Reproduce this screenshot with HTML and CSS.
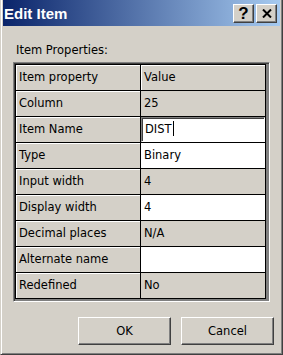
FILE: index.html
```html
<!DOCTYPE html>
<html lang="en">
    <head>
        <meta charset="UTF-8">
        <title>Edit Item</title>
        <link rel="stylesheet" href="styles.css">
    </head>
    <body>
        <div class="window">
            <div class="titlebar">
                <span class="title">Edit Item</span>
                <div class="caption-btns">
                    <button class="cap-btn help">?</button>
                    <button class="cap-btn close">
                        <svg width="10" height="9" viewBox="0 0 10 9">
                            <path d="M1 0.5 L9 8.5 M9 0.5 L1 8.5" stroke="#000" stroke-width="2" fill="none"/>
                        </svg>
                    </button>
                </div>
            </div>

            <div class="content">
                <div class="label">Item Properties:</div>

                <div class="grid-frame">
                    <div class="grid">
                        <div class="cell fixed">Item property</div>
                        <div class="cell fixed">Value</div>

                        <div class="cell fixed">Column</div>
                        <div class="cell readonly">25</div>

                        <div class="cell fixed">Item Name</div>
                        <div class="cell edit"><span class="field">DIST<span class="caret"></span></span></div>

                        <div class="cell fixed">Type</div>
                        <div class="cell">Binary</div>

                        <div class="cell fixed">Input width</div>
                        <div class="cell readonly">4</div>

                        <div class="cell fixed">Display width</div>
                        <div class="cell">4</div>

                        <div class="cell fixed">Decimal places</div>
                        <div class="cell readonly">N/A</div>

                        <div class="cell fixed">Alternate name</div>
                        <div class="cell"></div>

                        <div class="cell fixed">Redefined</div>
                        <div class="cell readonly">No</div>
                    </div>
                </div>

                <div class="buttons">
                    <button class="btn">OK</button>
                    <button class="btn">Cancel</button>
                </div>
            </div>
        </div>
    </body>
</html>
```

FILE: styles.css
```css
:root {
    --face: #d4d0c8;
    --shadow: #808080;
    --dark: #404040;
}

body {
    margin: 0;
    padding: 0;
    background: var(--face);
    font-family: "DejaVu Sans", Tahoma, sans-serif;
    font-size: 11.5px;
    color: #000;
}

.window {
    width: 283px;
    height: 355px;
    box-sizing: border-box;
    background: var(--face);
    border-left: 1px solid var(--face);
    border-right: 1px solid var(--dark);
    border-bottom: 1px solid var(--dark);
    box-shadow: inset 1px 0 #fff, inset -1px -1px var(--shadow);
    padding: 0 2px 0 2px;
    display: flex;
    flex-direction: column;
}

.titlebar {
    height: 26px;
    display: flex;
    align-items: center;
    justify-content: space-between;
    background: linear-gradient(to right, #0a246a, #a6caf0);
    padding: 0 3px 0 1px;
}

.title {
    color: #fff;
    font-family: "Liberation Sans", Arial, sans-serif;
    font-weight: bold;
    font-size: 15px;
    padding-top: 1px;
}

.caption-btns {
    display: flex;
    gap: 2px;
}

.cap-btn {
    width: 21px;
    height: 19px;
    padding: 0;
    margin: 0;
    background: var(--face);
    border: 1px solid;
    border-color: #fff var(--dark) var(--dark) #fff;
    box-shadow: inset -1px -1px var(--shadow);
    display: flex;
    align-items: center;
    justify-content: center;
    font-family: "Liberation Sans", Arial, sans-serif;
    color: #000;
}

.help {
    font-weight: bold;
    font-size: 17px;
    line-height: 1;
}

.content {
    flex: 1;
    padding: 17px 0 0 11px;
}

.label {
    line-height: 15px;
    padding-left: 2px;
    margin-bottom: 4px;
}

.grid-frame {
    width: 257px;
    height: 240px;
    box-sizing: border-box;
    margin-left: -1px;
    border: 1px solid;
    border-color: var(--shadow) #fff #fff var(--shadow);
    box-shadow: inset 1px 1px var(--dark);
    background: var(--shadow);
    padding: 1px 0 0 1px;
}

.grid {
    display: grid;
    grid-template-columns: 124px 124px;
    grid-auto-rows: 25px;
    gap: 1px;
    width: 251px;
    box-sizing: border-box;
    background: #000;
    border: 1px solid #000;
}

.cell {
    background: #fff;
    line-height: 25px;
    padding-left: 3px;
    white-space: nowrap;
    overflow: hidden;
}

.cell.fixed {
    background: var(--face);
    box-shadow: inset 1px 1px #fff;
}

.cell.readonly {
    background: var(--face);
}

.cell.edit {
    padding: 0;
}

.field {
    display: block;
    height: 25px;
    box-sizing: border-box;
    border: 1px solid;
    border-color: var(--shadow) #fff #fff var(--shadow);
    box-shadow: inset 1px 1px var(--dark);
    padding-left: 3px;
    line-height: 23px;
}

.caret {
    display: inline-block;
    width: 1px;
    height: 15px;
    background: #000;
    vertical-align: -3px;
    margin-left: 1px;
}

.buttons {
    display: flex;
    gap: 10px;
    margin-top: 15px;
    padding-left: 64px;
}

.btn {
    width: 93px;
    height: 28px;
    margin: 0;
    padding: 0;
    background: var(--face);
    border: 1px solid;
    border-color: #fff var(--dark) var(--dark) #fff;
    box-shadow: inset -1px -1px var(--shadow);
    font-family: "DejaVu Sans", Tahoma, sans-serif;
    font-size: 11.5px;
    color: #000;
}
```
